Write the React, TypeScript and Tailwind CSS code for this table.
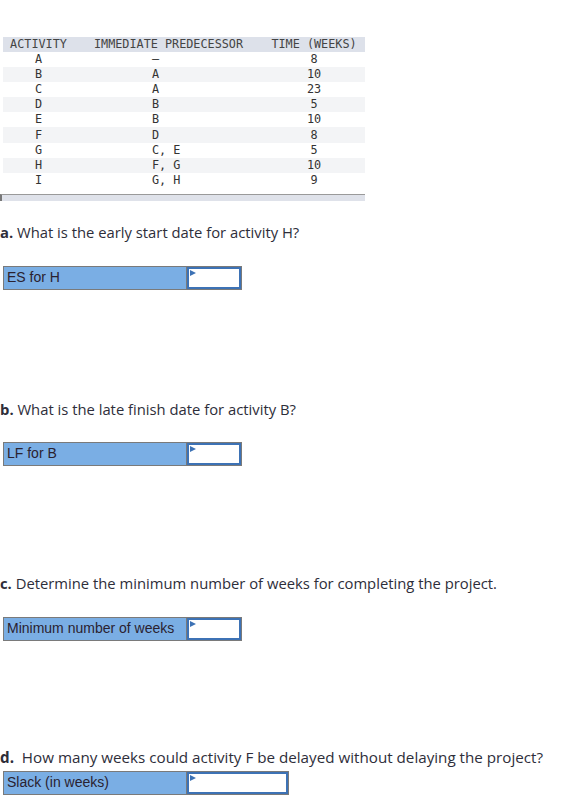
import React from "react";

const rows = [
  { act: "A", pred: "–", time: "8" },
  { act: "B", pred: "A", time: "10" },
  { act: "C", pred: "A", time: "23" },
  { act: "D", pred: "B", time: "5" },
  { act: "E", pred: "B", time: "10" },
  { act: "F", pred: "D", time: "8" },
  { act: "G", pred: "C, E", time: "5" },
  { act: "H", pred: "F, G", time: "10" },
  { act: "I", pred: "G, H", time: "9" },
];

function AnswerBox({ label, inputWidth }: { label: string; inputWidth: string }) {
  return (
    <div className="ml-[3px] flex h-[24px] w-fit border border-[#7a7a7a]">
      <div className="flex w-[183px] items-center border-r border-[#7a7a7a] bg-[#7aaee4] pl-[3px] font-['Liberation_Sans',sans-serif] text-[14px] text-[#2a2230]">
        {label}
      </div>
      <div className={`relative border-2 border-[#3d72b5] bg-white ${inputWidth}`}>
        <div className="absolute left-[1px] top-[1px] h-0 w-0 border-y-[3px] border-l-[6px] border-y-transparent border-l-[#3d72b5]" />
      </div>
    </div>
  );
}

function Question({ letter, text, gap }: { letter: string; text: string; gap?: boolean }) {
  return (
    <p
      className={`font-['Open_Sans',sans-serif] leading-[20px] text-[#2e2e3a] ${
        gap ? "text-[15.2px]" : "text-[14.8px]"
      }`}
    >
      <span className="font-bold">{letter}.</span>
      {gap ? "\u00a0 " : " "}
      {text}
    </p>
  );
}

export default function App() {
  return (
    <div className="h-[799px] w-[566px] overflow-hidden bg-white pt-[37px]">
      {/* Activity table */}
      <div className="w-[365px] font-['DejaVu_Sans_Mono',monospace] text-[11.8px] text-[#333]">
        <div className="ml-[3px] grid h-[15px] grid-cols-[71px_189px_102px] items-center bg-[#dde1ea] leading-[15px] text-[#444]">
          <span className="text-center">ACTIVITY</span>
          <span className="text-center">IMMEDIATE PREDECESSOR</span>
          <span className="text-center">TIME (WEEKS)</span>
        </div>
        {rows.map((r, i) => (
          <div
            key={r.act}
            className={`ml-[3px] grid h-[15.1px] grid-cols-[71px_189px_102px] items-center leading-[15px] ${
              i % 2 === 1 ? "bg-[#f3f4f6]" : "bg-white"
            }`}
          >
            <span className="text-center">{r.act}</span>
            <span className="pl-[78px]">{r.pred}</span>
            <span className="text-center">{r.time}</span>
          </div>
        ))}
        <div className="mt-[6px] h-[7px] border-l-2 border-t border-l-[#777] border-t-[#9a9a9a] bg-[#dfe2ea]" />
      </div>

      <div className="mt-[21px]">
        <Question letter="a" text="What is the early start date for activity H?" />
      </div>
      <div className="mt-[24px]">
        <AnswerBox label="ES for H" inputWidth="w-[54px]" />
      </div>

      <div className="mt-[109px]">
        <Question letter="b" text="What is the late finish date for activity B?" />
      </div>
      <div className="mt-[23px]">
        <AnswerBox label="LF for B" inputWidth="w-[54px]" />
      </div>

      <div className="mt-[107px]">
        <Question letter="c" text="Determine the minimum number of weeks for completing the project." />
      </div>
      <div className="mt-[24px]">
        <AnswerBox label="Minimum number of weeks" inputWidth="w-[54px]" />
      </div>

      <div className="mt-[106px]">
        <Question letter="d" text="How many weeks could activity F be delayed without delaying the project?" gap />
      </div>
      <div className="mt-[4px]">
        <AnswerBox label="Slack (in weeks)" inputWidth="w-[101px]" />
      </div>
    </div>
  );
}
